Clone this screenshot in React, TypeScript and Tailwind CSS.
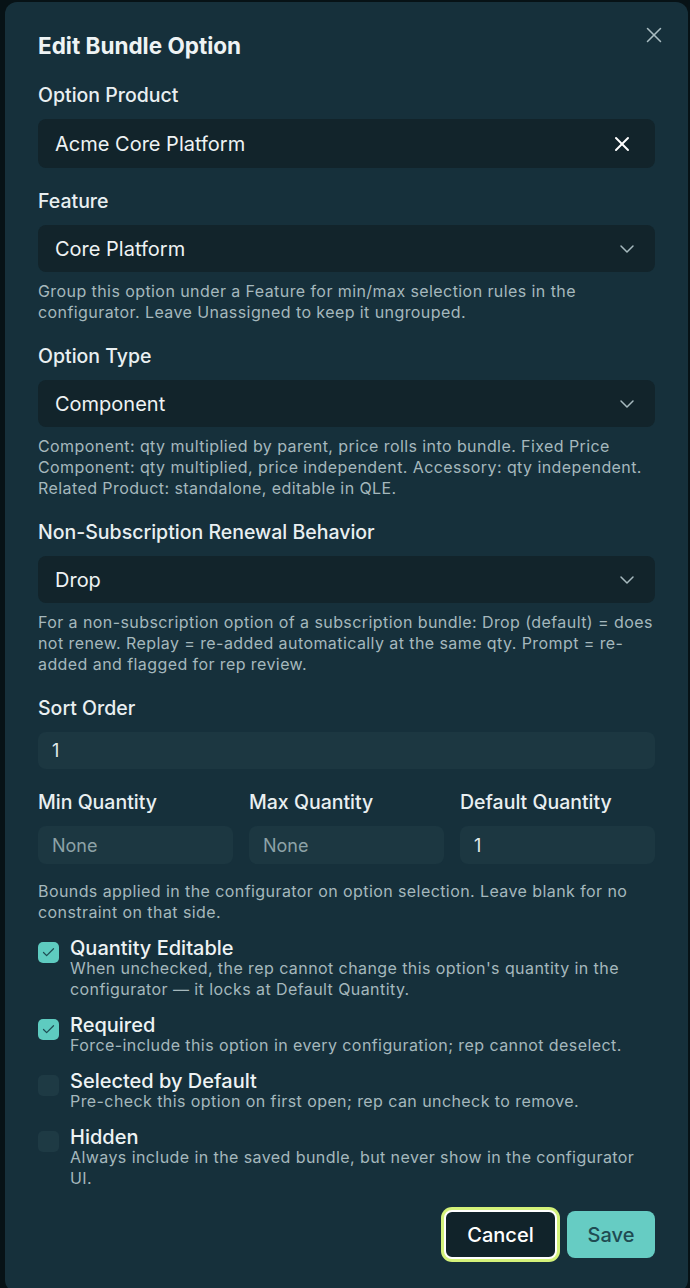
import React, { useState } from 'react';
import { X, ChevronDown, Check } from 'lucide-react';

interface SelectFieldProps {
  label: string;
  value: string;
  help?: string;
}

function SelectField({ label, value, help }: SelectFieldProps) {
  return (
    <div>
      <label className="mb-[11px] block text-[19.5px] font-medium leading-[26px] text-[#e9eff1]">{label}</label>
      <div className="flex h-[47px] items-center justify-between rounded-lg bg-[#12242b] pl-[17px] pr-[16px]">
        <span className="text-[20px] text-[#eef3f4]">{value}</span>
        <ChevronDown size={24} strokeWidth={1.5} className="text-[#a7babf]" />
      </div>
      {help && <p className="mt-[9px] text-[16px] leading-[21px] tracking-[0.42px] text-[#a5b8bd]">{help}</p>}
    </div>
  );
}

interface NumberFieldProps {
  label: string;
  value?: string;
  placeholder?: string;
}

function NumberField({ label, value, placeholder }: NumberFieldProps) {
  return (
    <div className="min-w-0">
      <label className="mb-[11px] block text-[19.5px] font-medium leading-[26px] text-[#e9eff1]">{label}</label>
      <input
        type="text"
        defaultValue={value}
        placeholder={placeholder}
        className="h-[38px] w-full rounded-lg bg-[#1c3741] px-[14px] text-[18px] text-[#e3eaec] placeholder:text-[#8da2a7] focus:outline-none"
      />
    </div>
  );
}

interface CheckItemProps {
  label: string;
  description: string;
  checked: boolean;
}

function CheckItem({ label, description, checked }: CheckItemProps) {
  return (
    <div className="flex items-start gap-[11px]">
      <div
        className={
          checked
            ? 'mt-1 flex h-[21px] w-[21px] shrink-0 items-center justify-center rounded-[5px] bg-[#5ecbc0]'
            : 'mt-1 flex h-[21px] w-[21px] shrink-0 items-center justify-center rounded-[5px] bg-[#1e3a44]'
        }
      >
        {checked && <Check size={15} strokeWidth={2} className="text-[#1f4d54]" />}
      </div>
      <div className="min-w-0">
        <div className="text-[20px] font-medium leading-5 text-[#eef3f4]">{label}</div>
        <p className="text-[16px] leading-[21px] tracking-[0.42px] text-[#a5b8bd]">{description}</p>
      </div>
    </div>
  );
}

export default function App() {
  const [product] = useState('Acme Core Platform');

  return (
    <div className="min-h-screen bg-[#071216] pl-[5px] pt-[2px] font-[Inter,sans-serif]">
      <div className="relative w-[683px] rounded-xl bg-[#16303b] px-[33px] pb-[33px] pt-[28px]">
        <button className="absolute right-[21px] top-[20px] text-[#a9bcc1]" title="Close">
          <X size={26} strokeWidth={1.4} />
        </button>

        <h2 className="text-[22.5px] font-bold leading-8 text-[#eef3f4]">Edit Bundle Option</h2>

        <div className="mt-5 space-y-5">
          {/* Option Product */}
          <div>
            <label className="mb-[11px] block text-[19.5px] font-medium leading-[26px] text-[#e9eff1]">Option Product</label>
            <div className="flex h-[49px] items-center justify-between rounded-lg bg-[#12242b] pl-[17px] pr-[21px]">
              <span className="text-[20px] text-[#eef3f4]">{product}</span>
              <X size={24} strokeWidth={2} className="text-white" />
            </div>
          </div>

          <SelectField
            label="Feature"
            value="Core Platform"
            help="Group this option under a Feature for min/max selection rules in the configurator. Leave Unassigned to keep it ungrouped."
          />

          <SelectField
            label="Option Type"
            value="Component"
            help="Component: qty multiplied by parent, price rolls into bundle. Fixed Price Component: qty multiplied, price independent. Accessory: qty independent. Related Product: standalone, editable in QLE."
          />

          <SelectField
            label="Non-Subscription Renewal Behavior"
            value="Drop"
            help="For a non-subscription option of a subscription bundle: Drop (default) = does not renew. Replay = re-added automatically at the same qty. Prompt = re-added and flagged for rep review."
          />

          <div>
            <label className="mb-[11px] block text-[19.5px] font-medium leading-[26px] text-[#e9eff1]">Sort Order</label>
            <input
              type="text"
              defaultValue="1"
              className="h-[37px] w-full rounded-lg bg-[#1c3741] px-[14px] text-[18px] text-[#e3eaec] focus:outline-none"
            />
          </div>

          <div>
            <div className="grid grid-cols-3 gap-4">
              <NumberField label="Min Quantity" placeholder="None" />
              <NumberField label="Max Quantity" placeholder="None" />
              <NumberField label="Default Quantity" value="1" />
            </div>
            <p className="mt-[17px] text-[16px] leading-[21px] tracking-[0.42px] text-[#a5b8bd]">
              Bounds applied in the configurator on option selection. Leave blank for no constraint on that side.
            </p>
          </div>
        </div>

        <div className="mt-[15px] space-y-[15px]">
          <CheckItem
            checked
            label="Quantity Editable"
            description="When unchecked, the rep cannot change this option's quantity in the configurator — it locks at Default Quantity."
          />
          <CheckItem
            checked
            label="Required"
            description="Force-include this option in every configuration; rep cannot deselect."
          />
          <CheckItem
            checked={false}
            label="Selected by Default"
            description="Pre-check this option on first open; rep can uncheck to remove."
          />
          <CheckItem
            checked={false}
            label="Hidden"
            description="Always include in the saved bundle, but never show in the configurator UI."
          />
        </div>

        <div className="mt-[21px] flex items-center justify-end gap-[10px]">
          <button className="h-[49px] w-[113px] rounded-lg border-2 border-white bg-[#11232a] text-[20px] font-medium text-white ring-[3px] ring-[#d4f27a]">
            Cancel
          </button>
          <button className="h-[47px] w-[88px] rounded-lg bg-[#66ccc3] text-[20px] font-medium text-[#1f4b52]">
            Save
          </button>
        </div>
      </div>
    </div>
  );
}
